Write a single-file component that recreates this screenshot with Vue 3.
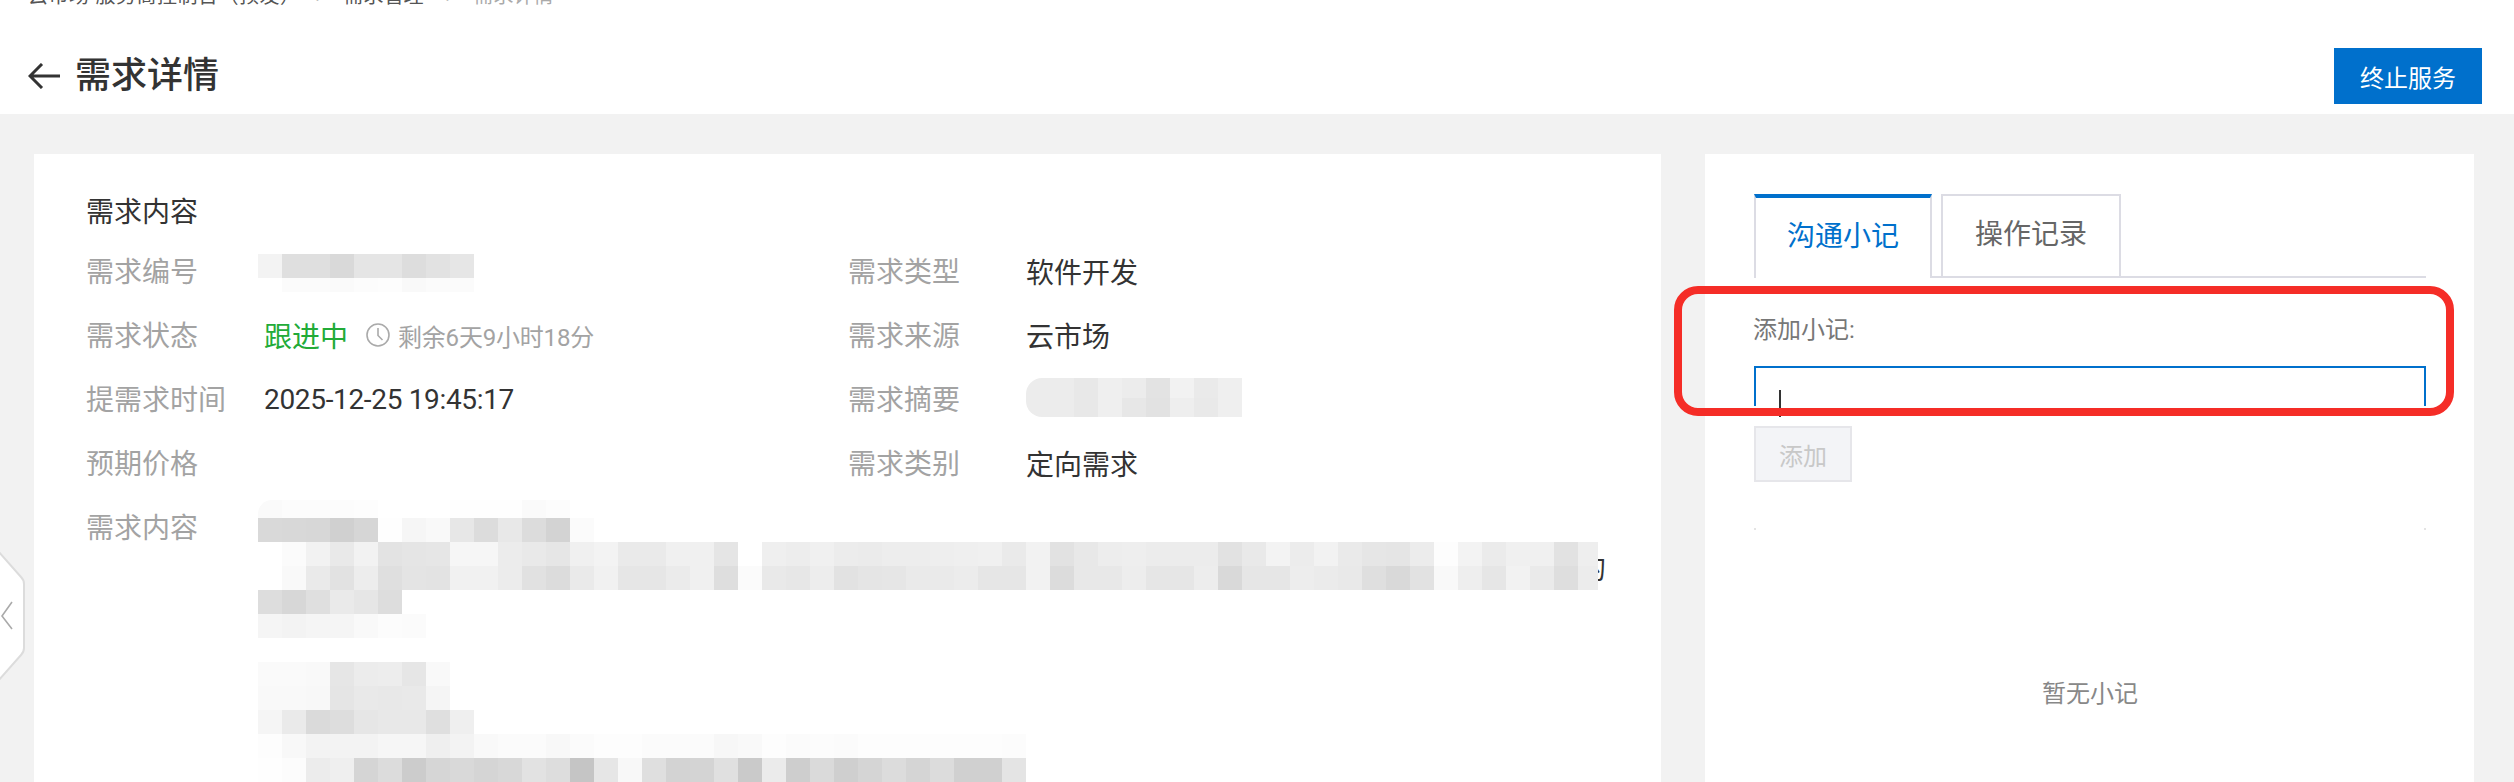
<template>
  <div class="page">
    <header class="head">
      <div class="crumbs">
        <span class="crumb-first">云市场-服务商控制台（预发）</span>
        <span class="sep">›</span>
        <span>需求管理</span>
        <span class="sep">›</span>
        <span class="crumb-now">需求详情</span>
      </div>
      <div class="title-row">
        <div class="title">
          <svg class="back" width="32" height="26" viewBox="0 0 32 26" fill="none" stroke="#333" stroke-width="3">
            <path d="M14 1 2 13l12 12M2 13h30" />
          </svg>
          <h1>需求详情</h1>
        </div>
        <button class="stop-btn">终止服务</button>
      </div>
    </header>

    <main class="main">
      <section class="card detail">
        <h2 class="detail-title">需求内容</h2>
        <div class="fields">
          <div class="field">
            <span class="label">需求编号</span>
            <div class="mosaic mosaic-code">
              <div v-for="(row, i) in codeRows" :key="i" class="mosaic-row" :style="{ height: row.height + 'px' }">
                <i v-for="(c, j) in row.cells" :key="j" :style="{ background: c }"></i>
              </div>
            </div>
          </div>
          <div class="field">
            <span class="label">需求类型</span>
            <span class="value">软件开发</span>
          </div>
          <div class="field">
            <span class="label">需求状态</span>
            <span class="status">跟进中</span>
            <svg class="clock" width="24" height="24" viewBox="0 0 24 24" fill="none" stroke="#aaa" stroke-width="1.6">
              <circle cx="12" cy="12" r="11" />
              <path d="M12 5v7.5l4.5 4.5" />
            </svg>
            <span class="remain">剩余6天9小时18分</span>
          </div>
          <div class="field">
            <span class="label">需求来源</span>
            <span class="value">云市场</span>
          </div>
          <div class="field">
            <span class="label">提需求时间</span>
            <span class="value date">2025-12-25 19:45:17</span>
          </div>
          <div class="field">
            <span class="label">需求摘要</span>
            <div class="mosaic mosaic-summary">
              <div v-for="(row, i) in summaryRows" :key="i" class="mosaic-row" :style="{ height: row.height + 'px' }">
                <i v-for="(c, j) in row.cells" :key="j" :style="{ background: c }"></i>
              </div>
            </div>
          </div>
          <div class="field">
            <span class="label">预期价格</span>
          </div>
          <div class="field">
            <span class="label">需求类别</span>
            <span class="value">定向需求</span>
          </div>
          <div class="field field-wide">
            <span class="label">需求内容</span>
            <div class="content">
              <span class="content-tail">的</span>
              <div class="mosaic mosaic-content">
                <div v-for="(row, i) in contentRows" :key="i" class="mosaic-row" :style="{ height: row.height + 'px' }">
                  <i v-for="(c, j) in row.cells" :key="j" :style="{ background: c }"></i>
                </div>
              </div>
            </div>
          </div>
        </div>
      </section>

      <aside class="card notes">
        <div class="tabs">
          <div class="tab tab-active">沟通小记</div>
          <div class="tab">操作记录</div>
        </div>
        <div class="add-label">添加小记:</div>
        <div class="input-box"><span class="caret"></span></div>
        <button class="add-btn" disabled>添加</button>
        <div class="dots"><i></i><i></i></div>
        <div class="empty">暂无小记</div>
        <div class="annotation"></div>
      </aside>
    </main>

    <svg class="handle" width="28" height="130" viewBox="0 0 28 130" fill="none">
      <path d="M-2 0 21 26q3 3 3 7v64q0 4-3 7L-2 130Z" fill="#fff" stroke="#dcdcdc" stroke-width="2" />
      <path d="M12 51 2 65l10 13" stroke="#aaa" stroke-width="1.6" />
    </svg>
  </div>
</template>

<script setup>
// blurred blocks from the screenshot, one grey level per 24px tile
const toRows = (rows) =>
  rows.map(([height, tiles]) => ({
    height,
    cells: tiles ? tiles.split(' ').map((t) => '#' + t + t + t) : []
  }));

const codeRows = toRows([
  [24, 'f3 df df d9 e5 e5 dd e2 e6'],
  [14, 'ff fb fb fa fc fd f9 fb fb']
]);

const summaryRows = toRows([
  [20, 'ec ec e8 ef ec e3 f2 ea ef'],
  [19, 'ec ec e8 ef e7 e2 ee e9 ef']
]);

const contentRows = toRows([
  [18, 'fa fc fc fc fd ff ff ff fe fe fe fa fc'],
  [24, 'd9 d8 d7 d0 d6 fe f6 f9 e7 dc e8 dc d3 fb'],
  [24, 'ff fb f2 e9 f2 e3 e5 e6 f6 f6 ec e9 e6 f0 f3 ea ea f0 f0 e5 ff ef ed f0 ec eb ed ed ee ef f0 ea f2 e2 e8 ed ee ec ec ec e2 e9 f3 ec f2 ea e6 e5 ec fd f3 eb f0 f0 e2 ee'],
  [24, 'ff f9 ea e2 ed df e4 e3 f1 f1 ec e1 dc ea f1 e6 e6 eb f0 de fb e9 e7 ed e2 e5 e6 ea ea ec e6 e6 f2 dc e8 e8 ed e6 e6 ed d9 e6 e6 ed eb e9 df d9 e2 f9 ee e6 f2 ea de ec'],
  [24, 'dd d7 df ea e6 dd'],
  [24, 'f5 f3 f5 f5 f9 fc fb'],
  [24, ''],
  [24, 'fa fa f9 e6 ec ed e6 f9'],
  [24, 'f9 f9 f8 e5 e9 e8 e9 f5'],
  [24, 'f5 ea da dd e6 e8 e8 df ef'],
  [24, 'fd f8 f3 f3 f3 f6 f6 ef f3 f9 fb fb f8 fb fd fd fb fb fb f7 f9 fd fb fc fb fd fd fd fd fd fd fc'],
  [24, 'fe fc ec ef d5 dc cc d6 d9 d5 d8 e2 dd c5 e6 f8 df d3 d4 e0 ca eb ce da cf d5 dc d5 dc d0 d0 e4']
]);
</script>

<style>
html,
body {
  margin: 0;
  background: #f2f2f2;
  overflow: hidden;
}
</style>

<style scoped>
.page {
  position: relative;
  width: 2514px;
  height: 782px;
  overflow: hidden;
  background: #f2f2f2;
  color: #333;
  font-family: Roboto, "Noto Sans CJK SC", sans-serif;
}

.head {
  height: 114px;
  padding: 0 32px 0 28px;
  box-sizing: border-box;
  background: #fff;
}

.crumbs {
  display: flex;
  align-items: flex-end;
  height: 10px;
  font-size: 20px;
  line-height: 28px;
  color: #555;
  white-space: nowrap;
}

.crumb-first {
  letter-spacing: 0.5px;
  margin-right: -7px;
}

.sep {
  width: 50px;
  text-align: center;
  color: #bbb;
}

.crumb-now {
  color: #aaa;
}

.title-row {
  display: flex;
  align-items: center;
  justify-content: space-between;
  height: 56px;
  margin-top: 38px;
}

.title {
  display: flex;
  align-items: center;
  gap: 15px;
}

.title h1 {
  margin: 0;
  font-size: 36px;
  line-height: 52px;
  font-weight: 500;
}

.stop-btn {
  width: 148px;
  height: 56px;
  border: 0;
  background: #0070cc;
  color: #fff;
  font: inherit;
  font-size: 24px;
}

.main {
  display: flex;
  gap: 44px;
  height: 668px;
  padding: 40px 40px 0 34px;
  box-sizing: border-box;
}

.card {
  background: #fff;
  height: 640px;
  box-sizing: border-box;
}

.detail {
  width: 1627px;
  padding: 41px 0 0 52px;
}

.detail-title {
  margin: 0 0 8px;
  font-size: 28px;
  line-height: 36px;
  font-weight: 400;
}

.fields {
  display: grid;
  grid-template-columns: 762px 1fr;
  grid-auto-rows: 64px;
  font-size: 28px;
}

.field {
  display: flex;
  align-items: center;
  white-space: nowrap;
}

.field-wide {
  grid-column: 1 / 3;
  align-items: flex-start;
}

.label {
  width: 178px;
  height: 64px;
  flex: none;
  line-height: 67px;
  color: #a3a3a3;
}

.date {
  letter-spacing: -0.33px;
}

.status {
  color: #22ab38;
}

.clock {
  margin: 0 8px 0 18px;
}

.remain {
  font-size: 24px;
  letter-spacing: -0.2px;
  color: #a3a3a3;
}

.mosaic {
  overflow: hidden;
}

.mosaic-row {
  display: flex;
}

.mosaic-row i {
  flex: none;
  width: 24px;
  height: 100%;
}

.mosaic-code {
  margin: 4px 0 0 -6px;
}

.mosaic-summary {
  margin: -3px 0 0 0;
  border-radius: 16px 0 0 16px;
}

.content {
  position: relative;
  margin: 5px 0 0 -6px;
}

.mosaic-content {
  position: relative;
  width: 1340px;
  border-top-left-radius: 14px;
}

.content-tail {
  position: absolute;
  left: 1320px;
  top: 56px;
  line-height: 28px;
}

.notes {
  position: relative;
  width: 769px;
  padding: 40px 48px 0 49px;
}

.tabs {
  display: flex;
  height: 84px;
  box-sizing: border-box;
  border-bottom: 2px solid #dcdce4;
}

.tab {
  width: 180px;
  height: 84px;
  margin-left: 9px;
  box-sizing: border-box;
  border: 2px solid #dcdce4;
  border-bottom: 0;
  font-size: 28px;
  line-height: 78px;
  text-align: center;
  color: #666;
}

.tab-active {
  position: relative;
  width: 178px;
  margin-left: 0;
  border-top: 4px solid #0070cc;
  background: #fff;
  color: #0070cc;
}

.add-label {
  margin: 36px 0 0 -1px;
  font-size: 24px;
  line-height: 32px;
  color: #777;
}

.input-box {
  position: relative;
  height: 40px;
  margin-top: 20px;
  box-sizing: border-box;
  border: 2px solid #0070cc;
  border-bottom: 0;
}

.caret {
  position: absolute;
  left: 23px;
  top: 22px;
  width: 2px;
  height: 27px;
  background: #333;
}

.add-btn {
  display: block;
  width: 98px;
  height: 56px;
  margin-top: 20px;
  padding: 0;
  box-sizing: border-box;
  border: 2px solid #e6e6ea;
  background: #f3f4f7;
  color: #c8c8c8;
  font: inherit;
  font-size: 24px;
}

.dots {
  display: flex;
  justify-content: space-between;
  margin-top: 46px;
}

.dots i {
  width: 2px;
  height: 2px;
  background: #e4e4e4;
}

.empty {
  margin-top: 148px;
  font-size: 24px;
  line-height: 32px;
  text-align: center;
  color: #888;
}

.annotation {
  position: absolute;
  left: -31px;
  top: 132px;
  width: 780px;
  height: 130px;
  box-sizing: border-box;
  border: 8px solid #f52d27;
  border-radius: 24px;
}

.handle {
  position: absolute;
  left: 0;
  top: 551px;
}
</style>
